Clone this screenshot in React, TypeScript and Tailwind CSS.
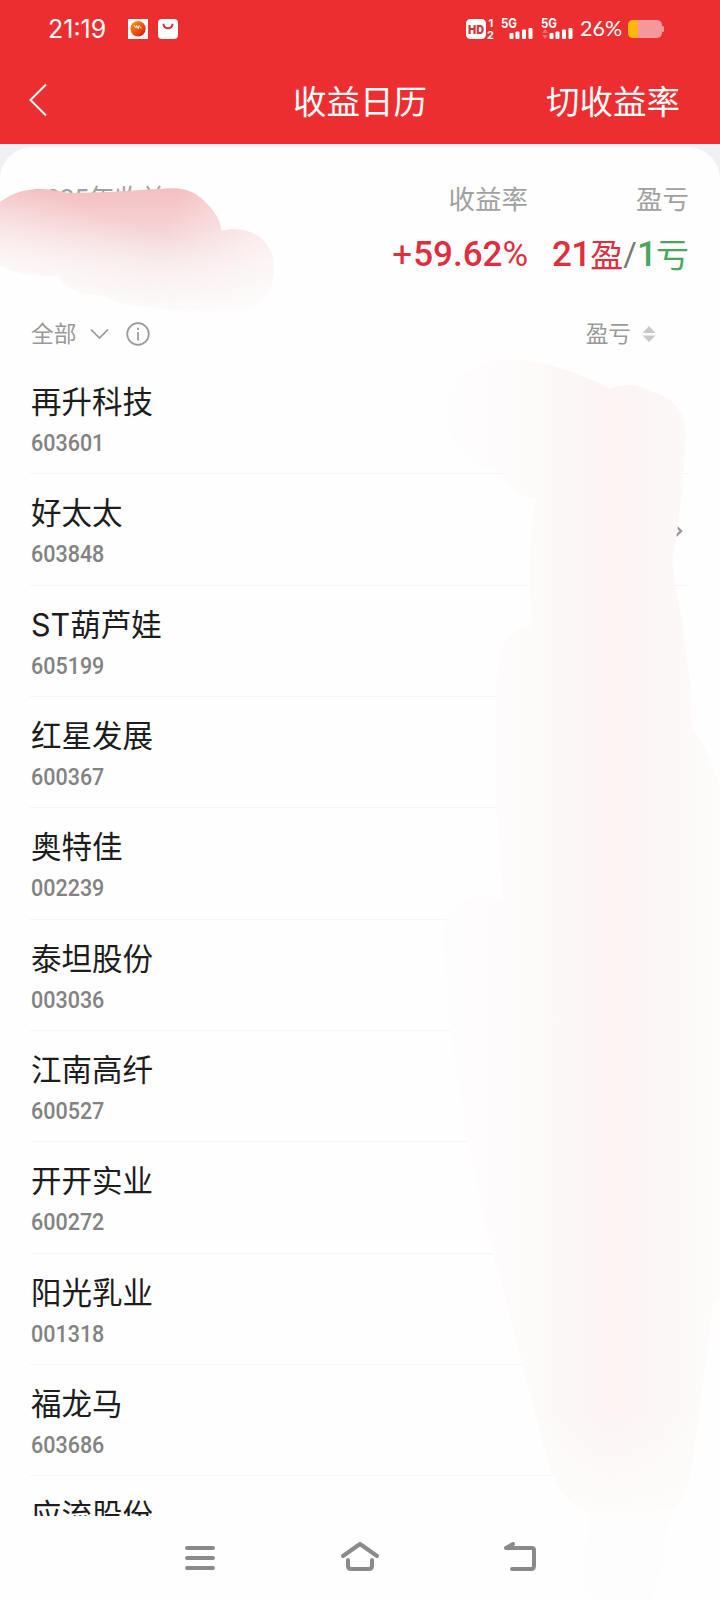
const stocks = [
  { name: "再升科技", code: "603601" },
  { name: "好太太", code: "603848" },
  { name: "ST葫芦娃", code: "605199" },
  { name: "红星发展", code: "600367" },
  { name: "奥特佳", code: "002239" },
  { name: "泰坦股份", code: "003036" },
  { name: "江南高纤", code: "600527" },
  { name: "开开实业", code: "600272" },
  { name: "阳光乳业", code: "001318" },
  { name: "福龙马", code: "603686" },
  { name: "应流股份", code: "603308" },
];

function Signal({ arrows = false }: { arrows?: boolean }) {
  return (
    <svg width="33" height="32" viewBox="0 -5 33 32" fill="white">
      <text x="0" y="10" fontSize="13" fontWeight="700" textLength="16" lengthAdjust="spacingAndGlyphs">
        5G
      </text>
      <rect x="8.5" y="15" width="4" height="6" rx="1" />
      <rect x="14.5" y="13.5" width="4" height="7.5" rx="1" />
      <rect x="21" y="11.5" width="4" height="9.5" rx="1" />
      <rect x="27.5" y="10" width="4" height="11" rx="1" />
      {arrows && <path d="M1 15l3-4 3 4zM1 17l3 4 3-4z" fill="#f8696a" />}
    </svg>
  );
}

function StatusBar() {
  return (
    <div className="flex h-14 items-center pl-12 pr-14">
      <span className="w-[80px] pt-[3px] text-[25px]">21:19</span>
      <svg className="mt-px" width="50" height="20" viewBox="0 0 50 20">
        <defs>
          <linearGradient id="ball" x1="0" y1="0" x2="1" y2="1">
            <stop offset="0" stopColor="#f7a51c" />
            <stop offset="0.5" stopColor="#ea5a14" />
            <stop offset="1" stopColor="#c81010" />
          </linearGradient>
        </defs>
        <rect width="20" height="20" fill="white" />
        <circle cx="10" cy="9.7" r="7.7" fill="url(#ball)" />
        <path d="M6 6l2 3 .7-2.500 1.600 3.500.7-3.500 2.500 3" stroke="#ffe9cf" strokeWidth="1" fill="none" />
        <rect x="30" width="20" height="20" rx="4" fill="white" />
        <path d="M35.5 5.5c1 5 8 5 9 0" stroke="#c93b3e" strokeWidth="2" fill="none" strokeLinecap="round" />
      </svg>
      <div className="ml-auto flex items-center">
        <svg className="mt-px" width="36" height="32" viewBox="0 -5 36 32" fill="white">
          <rect x="1" y="1" width="20" height="20" rx="4.5" />
          <text x="3" y="15.500" fontSize="12" fontWeight="900" fill="#cf3a3d" textLength="16" lengthAdjust="spacingAndGlyphs">
            HD
          </text>
          <text x="23.500" y="9" fontSize="11" fontWeight="700">1</text>
          <text x="22" y="21" fontSize="11" fontWeight="700">2</text>
        </svg>
        <div className="mt-px flex gap-[7px]">
          <Signal />
          <Signal arrows />
        </div>
        <span className="ml-[6px] w-[48px] font-[Lato,sans-serif] text-[21.5px]">26%</span>
        <svg className="mt-px" width="36" height="18" viewBox="0 0 36 18">
          <rect width="34" height="18" rx="5" fill="#f6989a" />
          <path d="M5 0h4.5v18H5a5 5 0 0 1-5-5V5a5 5 0 0 1 5-5z" fill="#ffb805" />
          <rect x="33.5" y="6" width="2.5" height="6" rx="1" fill="#f6989a" />
        </svg>
      </div>
    </div>
  );
}

function TitleBar() {
  return (
    <div className="grid h-[88px] grid-cols-[1fr_auto_1fr] items-center px-10 text-[33.5px]">
      <svg className="-ml-3" width="20" height="34" viewBox="0 0 20 34" fill="none" stroke="white" strokeWidth="2">
        <path d="M18 1.5L2.5 17 18 32.5" />
      </svg>
      <h1 className="pt-1">收益日历</h1>
      <span className="justify-self-end pt-1">切收益率</span>
    </div>
  );
}

function Summary() {
  return (
    <div className="flex h-[140px] items-start px-[31px] pt-8">
      <span className="font-[Roboto,'Noto_Sans_CJK_SC',sans-serif] text-[26px] leading-10 tracking-[-0.2px] text-[#a0a0a0]">
        2025年收益
      </span>
      <div className="ml-auto text-right">
        <div className="text-[26.5px] leading-10 text-[#a0a0a0]">收益率</div>
        <div className="mt-[13px] flex justify-end font-[Roboto,sans-serif] text-[35px] leading-[46px] text-[#dd2f3e]">
          <span className="pr-px">+</span>
          <span className="font-medium">59.62</span>
          <span>%</span>
        </div>
      </div>
      <div className="ml-6 text-right">
        <div className="text-[26.5px] leading-10 text-[#a0a0a0]">盈亏</div>
        <div className="mt-[13px] flex items-center whitespace-nowrap text-[33px] leading-[46px] text-[#dd2f3e]">
          <span className="font-[Roboto,sans-serif] text-[35px] font-medium tracking-[-0.8px]">21</span>
          <span>盈</span>
          <span className="font-[Roboto,sans-serif] text-[#777]">/</span>
          <span className="font-[Roboto,sans-serif] text-[35px] font-medium tracking-[-0.8px] text-[#4ba55e]">1</span>
          <span className="text-[#4ba55e]">亏</span>
        </div>
      </div>
    </div>
  );
}

function Filters() {
  return (
    <div className="flex h-[76px] items-center pl-[31px] pr-16 pt-[18px] text-[22.7px] text-[#999]">
      <span className="pt-px">全部</span>
      <svg className="ml-[14px]" width="19" height="12" viewBox="0 0 19 12" fill="none" stroke="#999" strokeWidth="1.7">
        <path d="M1 1.5l8.5 8.5L18 1.5" />
      </svg>
      <svg className="ml-[17px]" width="24" height="24" viewBox="0 0 24 24" fill="none" stroke="#999" strokeWidth="1.7">
        <circle cx="12" cy="12" r="10.8" />
        <path d="M12 10v8.5M12 5.8v2.2" />
      </svg>
      <span className="ml-auto pt-px">盈亏</span>
      <svg className="ml-[11px]" width="14" height="18" viewBox="0 0 14 18" fill="#c9c9c9">
        <path d="M7 1l6.5 7H.5zM7 17l6.5-6.500H.5z" />
      </svg>
    </div>
  );
}

function StockRow({ name, code }: { name: string; code: string }) {
  return (
    <li className="ml-[30px] mr-[31px] flex h-[111.33px] shrink-0 items-center border-b border-[#f5f5f5] pl-px">
      <div className="pt-[7px]">
        <div className="text-[30.5px] leading-[42px] text-[#1d1d1d]">{name}</div>
        <div className="mt-px origin-left scale-x-[.915] font-[Roboto,sans-serif] text-[23.5px] font-medium leading-[38px] text-[#828282]">
          {code}
        </div>
      </div>
      <svg className="ml-auto mr-[6px] mt-1" width="9" height="12" viewBox="0 0 9 12" fill="none" stroke="#999" strokeWidth="2.4">
        <path d="M2 1l5 5-5 5" />
      </svg>
    </li>
  );
}

function NavBar() {
  return (
    <nav className="flex h-[84px] shrink-0 items-center bg-[#fefefe] pl-[185px]">
      <svg width="352" height="34" viewBox="0 0 352 34" fill="none" stroke="#8a8a8a" strokeWidth="4" strokeLinecap="round" strokeLinejoin="round">
        <path d="M2 7h26M2 17h26M2 27h26" />
        <path d="M158 15l17-12 17 12M163 19v6q0 3 3 3h18q3 0 3-3v-6" />
        <path d="M328 3l-7 4h26q2 0 2 2v16q0 3-3 3h-19" />
      </svg>
    </nav>
  );
}

// Brush strokes hiding the account figures
function Smudges() {
  return (
    <svg className="pointer-events-none absolute left-0 top-0" width="720" height="1600" viewBox="0 0 720 1600">
      <defs>
        <linearGradient id="pink" gradientUnits="userSpaceOnUse" x1="100" y1="188" x2="100" y2="312">
          <stop offset="0" stopColor="#f4bec1" />
          <stop offset="0.3" stopColor="#f6d1d3" />
          <stop offset="0.6" stopColor="#f7e6e7" />
          <stop offset="1" stopColor="#f8f2f2" />
        </linearGradient>
        <linearGradient id="fadeLeft" gradientUnits="userSpaceOnUse" x1="10" y1="272" x2="40" y2="190">
          <stop offset="0" stopColor="#fefefe" stopOpacity="0.75" />
          <stop offset="1" stopColor="#fefefe" stopOpacity="0" />
        </linearGradient>
        <linearGradient id="fadeRight" gradientUnits="userSpaceOnUse" x1="165" y1="230" x2="275" y2="270">
          <stop offset="0" stopColor="#fefefe" stopOpacity="0" />
          <stop offset="1" stopColor="#fefefe" stopOpacity="0.7" />
        </linearGradient>
        <linearGradient id="pale" gradientUnits="userSpaceOnUse" x1="445" y1="0" x2="720" y2="0">
          <stop offset="0" stopColor="#fefdfd" />
          <stop offset="0.3" stopColor="#fdfafa" />
          <stop offset="0.45" stopColor="#fcf7f7" />
          <stop offset="0.6" stopColor="#fdf4f4" />
          <stop offset="0.75" stopColor="#fcf6f6" />
          <stop offset="1" stopColor="#fdfbfb" />
        </linearGradient>
        <linearGradient id="fadeDown" gradientUnits="userSpaceOnUse" x1="0" y1="1410" x2="0" y2="1515">
          <stop offset="0" stopColor="#fdfcfb" stopOpacity="0" />
          <stop offset="1" stopColor="#fdfcfb" />
        </linearGradient>
        <path
          id="cloud"
          d="M0 202C14 192 26 189 41 189C55 189 62 193 74 193L110 192L165 188.500C190 187 199 195 209 206C217 215 221 222 221 231C252 223 274 243 274 268C274 294 259 311 236 311L190 311C165 310 140 306 122 303C112 300 107 297 101 295C78 296 65 286 58 275C35 277 15 273 0 265Z"
        />
        <path
          id="column"
          d="M446 417C445 402 449 391 457 383C471 366 488 359 507 359C522 359 538 362 553 366C575 372 594 380 610 389C615 386 621 385 628 385C637 385 645 388 652 392C674 396 686 415 686 433C686 450 684 465 683 480C681 505 677 537 672 562L677 593C682 620 691 667 692 728C704 744 713 762 720 788V1300L713 1303C710 1335 706 1360 703 1383L693 1460C688 1485 683 1504 670 1511C589 1512 589 1512 589 1512C575 1510 561 1495 553 1475C541 1440 532 1400 522 1363L493 1253L480 1203C477 1180 471 1160 467 1140L450 1027L443 947C443 930 444 923 448 918C455 903 470 896 487 896L503 899L497 813C495 790 495 770 495 753C495 735 495 718 496 700C496 680 498 661 502 647C508 634 519 627 532 625C530 608 529 590 529 573C529 555 530 540 532 527C533 515 535 507 536 498C522 500 510 488 502 473C485 471 446 450 446 417Z"
        />
      </defs>
      <use href="#cloud" fill="url(#pink)" />
      <use href="#cloud" fill="url(#fadeLeft)" />
      <use href="#cloud" fill="url(#fadeRight)" />
      <use href="#column" fill="url(#pale)" />
      <use href="#column" fill="url(#fadeDown)" />
      <path d="M589 1512H670L665 1550Q660 1585 650 1600H593Q577 1578 587 1547Z" fill="#fdfdfd" />
    </svg>
  );
}

export default function App() {
  return (
    <div className="relative flex h-[1600px] w-[720px] flex-col overflow-hidden bg-[#f0eff4] font-[Inter,'Noto_Sans_CJK_SC',sans-serif]">
      <header className="h-[144px] shrink-0 bg-[#ed2e31] text-white">
        <StatusBar />
        <TitleBar />
      </header>
      <main className="mt-[3px] flex min-h-0 flex-1 flex-col overflow-hidden rounded-t-[32px] bg-[#fefefe]">
        <Summary />
        <Filters />
        <ul className="min-h-0 flex-1 overflow-hidden">
          {stocks.map((stock) => (
            <StockRow key={stock.code} {...stock} />
          ))}
        </ul>
      </main>
      <NavBar />
      <Smudges />
    </div>
  );
}
